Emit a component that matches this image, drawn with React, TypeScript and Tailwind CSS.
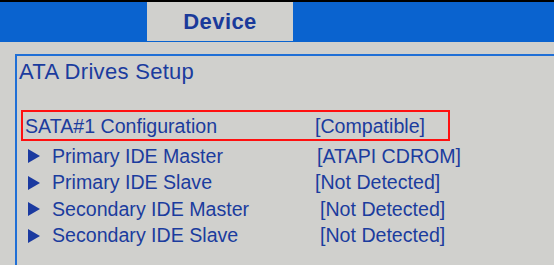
const rows = [
  { label: "Primary IDE Master", value: "[ATAPI CDROM]", valueX: "ml-[1px]" },
  { label: "Primary IDE Slave", value: "[Not Detected]", valueX: "ml-[-1px]" },
  { label: "Secondary IDE Master", value: "[Not Detected]", valueX: "ml-[4px]" },
  { label: "Secondary IDE Slave", value: "[Not Detected]", valueX: "ml-[4px]" },
]

function Arrow() {
  return (
    <svg width="12" height="14" viewBox="0 0 12 14" className="shrink-0">
      <polygon points="0,0 12,7 0,14" fill="#1b3aa0" />
    </svg>
  )
}

export default function App() {
  return (
    <div
      className="w-[554px] h-[265px] overflow-hidden flex flex-col bg-[#d0d0cd] text-[#1b3c9e]"
      style={{ fontFamily: '"Liberation Sans", Arial, sans-serif' }}
    >
      <div className="h-[2px] bg-black" />
      <div className="h-[40px] flex bg-[#0a63cf]">
        <div className="w-[147px]" />
        <div className="w-[146px] h-[39px] bg-[#d0d0cd] flex items-center justify-center">
          <span className="text-[22px] font-bold text-[#1a3a9a] tracking-[0.4px]">Device</span>
        </div>
      </div>
      <div className="h-[12px]" />
      <div className="flex-1 ml-[15px] border-l-2 border-t-2 border-[#1f6fd6] pl-[2px] pt-[4px]">
        <div className="text-[22px] leading-[24px] tracking-[0.3px]">ATA Drives Setup</div>
        <div className="mt-[26px] w-[429px] ml-[2px] h-[31px] border-2 border-[#ff1010] flex items-center pt-[3px] text-[19.6px]">
          <span className="w-[292px] pl-[2px]">SATA#1 Configuration</span>
          <span>[Compatible]</span>
        </div>
        <div className="flex flex-col mt-[2px]">
          {rows.map((r) => (
            <div key={r.label} className="h-[26.5px] flex items-center text-[19.6px]">
              <div className="w-[297px] flex items-center gap-[12px] pl-[9px]">
                <Arrow />
                <span>{r.label}</span>
              </div>
              <span className={r.valueX}>{r.value}</span>
            </div>
          ))}
        </div>
      </div>
    </div>
  )
}
